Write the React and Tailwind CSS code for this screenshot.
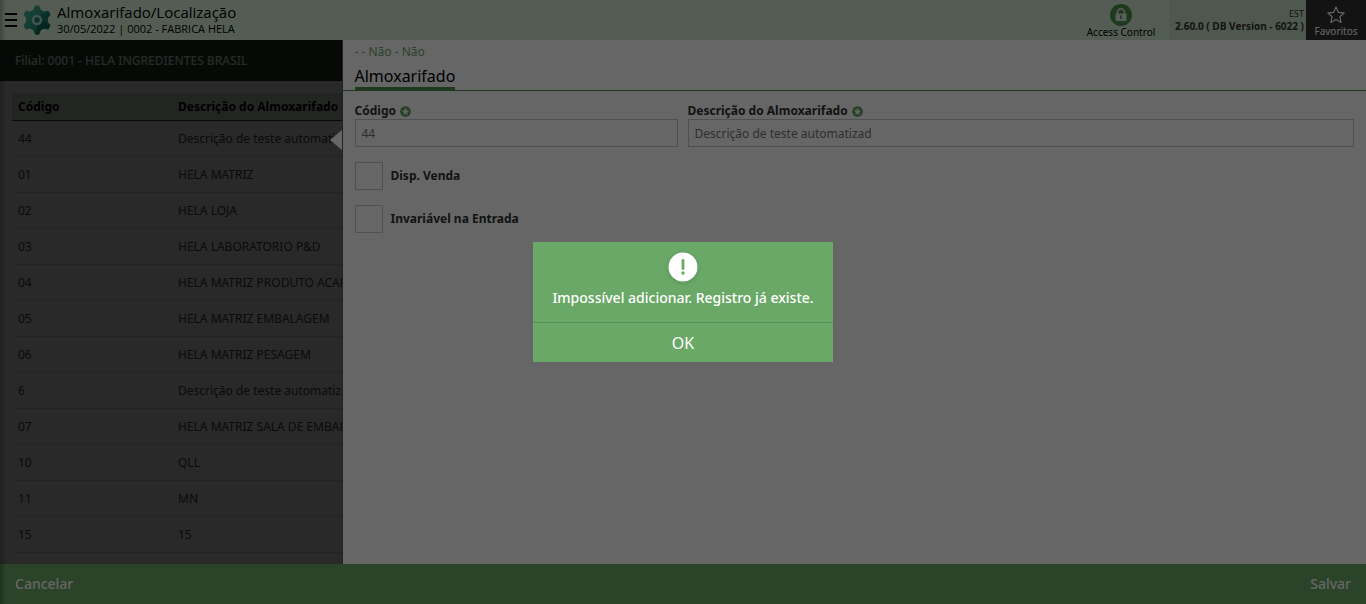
import { useId } from "react";

const rows = [
  ["44", "Descrição de teste automatizad"],
  ["01", "HELA MATRIZ"],
  ["02", "HELA LOJA"],
  ["03", "HELA LABORATORIO P&D"],
  ["04", "HELA MATRIZ PRODUTO ACABADO"],
  ["05", "HELA MATRIZ EMBALAGEM"],
  ["06", "HELA MATRIZ PESAGEM"],
  ["6", "Descrição de teste automatizad"],
  ["07", "HELA MATRIZ SALA DE EMBALAGEM"],
  ["10", "QLL"],
  ["11", "MN"],
  ["15", "15"],
];

function GearLogo() {
  return (
    <svg className="h-8 w-7 shrink-0" viewBox="0 0 28 32" aria-hidden="true">
      <defs>
        <linearGradient id="gear" x1="0" y1="0" x2="1" y2="1">
          <stop offset="0.2" stopColor="#40a78e" />
          <stop offset="0.75" stopColor="#157c66" />
        </linearGradient>
        <clipPath id="gear-shape">
          <path d="M12 1.500h4l1.800 4.200 3.200 1.700 4.200-1 2.300 4-2.500 3.600v4l2.500 3.600-2.300 4-4.200-1-3.200 1.700L16 30.500h-4l-1.800-4.200L7 24.600l-4.200 1-2.300-4L3 18v-4L.5 10.400l2.300-4 4.200 1 3.200-1.700z" />
        </clipPath>
      </defs>
      <g clipPath="url(#gear-shape)">
        <path d="M0 0h28v32H0z" fill="url(#gear)" />
        <path d="M17 11l11-4v12l-9-1z" fill="#0d6a56" opacity="0.5" />
        <path d="M18 17l10 4v11H12l2-10z" fill="#075946" opacity="0.8" />
      </g>
      <circle cx="14" cy="16" r="4" fill="#157c66" stroke="#a5cdbd" strokeWidth="2.600" />
    </svg>
  );
}

function Required() {
  return (
    <svg className="size-[11px]" viewBox="0 0 11 11" aria-hidden="true">
      <circle cx="5.5" cy="5.5" r="5.300" fill="#5c9c5a" />
      <path d="M5.500 2.300v3.400M2.500 4.600l3 1.100M8.500 4.600l-3 1.100M3.600 8.200l1.900-2.500M7.400 8.200l-1.900-2.500" stroke="#fff" strokeWidth="1.500" />
    </svg>
  );
}

function Field({ label, value, className }) {
  const id = useId();
  return (
    <div className={className}>
      <label htmlFor={id} className="flex h-4 items-center gap-1 text-xs font-bold text-[#303030]">
        {label}
        <Required />
      </label>
      <input
        id={id}
        defaultValue={value}
        className="block h-7 w-full border border-[#c8c8c8] bg-white px-1.5 text-xs text-[#777]"
      />
    </div>
  );
}

function Check({ label }) {
  return (
    <label className="flex w-fit items-center gap-2 text-xs font-bold text-[#303030]">
      <input type="checkbox" className="size-7 appearance-none border border-[#c8c8c8] bg-white" />
      {label}
    </label>
  );
}

function Header() {
  return (
    <header className="flex h-10 shrink-0 bg-[#cfe8cf] text-black">
      <div className="flex min-w-0 flex-1 items-center">
        <button aria-label="Menu" className="flex h-10 w-[23px] items-center pl-[5px]">
          <svg className="h-4 w-3" viewBox="0 0 12 16" aria-hidden="true">
            <path d="M0 2h12M0 8h12M0 14h12" stroke="currentColor" strokeWidth="2" />
          </svg>
        </button>
        <GearLogo />
        <div className="pb-0.5 pl-1.5 font-['Open_Sans','Noto_Sans',sans-serif]">
          <h1 className="text-[15px] leading-5">Almoxarifado/Localização</h1>
          <p className="text-[11px] leading-[14px]">30/05/2022 | 0002 - FABRICA HELA</p>
        </div>
      </div>
      <button className="flex w-24 flex-col items-center pt-1 text-[10px] leading-3">
        <svg className="size-[22px]" viewBox="0 0 22 22" aria-hidden="true">
          <circle cx="11" cy="11" r="11" fill="#4d8f4a" />
          <path d="M7.500 10V8.300a3.500 3.500 0 0 1 7 0V10" fill="none" stroke="#dcebdc" strokeWidth="1.600" />
          <rect x="5.500" y="9.500" width="11" height="7.500" rx="1" fill="#dcebdc" />
          <path d="M11 11.500v3.500" stroke="#4d8f4a" strokeWidth="1.600" />
        </svg>
        <span>Access Control</span>
      </button>
      <div className="flex w-[137px] flex-col justify-center bg-[#c5dcc5] pr-0.5 text-right text-[9px] leading-3 text-[#303030]">
        <span>EST</span>
        <b className="font-['Open_Sans','Noto_Sans',sans-serif] text-[10px] font-bold whitespace-nowrap">2.60.0 ( DB Version - 6022 )</b>
      </div>
      <button className="flex w-15 flex-col items-center bg-[#303030] pt-1.5 text-[10px] leading-3 text-white">
        <svg className="size-[18px] shrink-0" viewBox="0 0 18 18" aria-hidden="true">
          <path d="M9 1l2.400 5.300 5.800.6-4.300 3.900 1.200 5.700L9 13.600l-5.100 2.900 1.200-5.700L.8 6.900l5.800-.6z" fill="none" stroke="currentColor" strokeWidth="1.200" strokeLinejoin="round" />
        </svg>
        <span className="pt-px">Favoritos</span>
      </button>
    </header>
  );
}

function Sidebar() {
  return (
    <aside className="relative w-1/4 shrink-0 overflow-hidden bg-white">
      <div className="flex h-[41px] items-center bg-[#274427] pl-[15px] text-xs font-medium text-white">
        Filial: 0001 - HELA INGREDIENTES BRASIL
      </div>
      <div className="pt-3 pl-3">
        <table className="w-[600px] table-fixed border-collapse text-left text-xs text-[#484848]">
          <thead>
            <tr className="h-[27px] border-b border-[#305030] bg-[#dceadc] text-black">
              <th className="w-40 pt-0.5 pl-1.5 font-bold">Código</th>
              <th className="pt-0.5 pl-1.5 font-bold">Descrição do Almoxarifado</th>
            </tr>
          </thead>
          <tbody>
            {rows.map(([code, name]) => (
              <tr key={code} className="h-9 border-b border-[#ddd]">
                <td className="pt-0.5 pl-1.5">{code}</td>
                <td className="pt-0.5 pl-1.5">{name}</td>
              </tr>
            ))}
          </tbody>
        </table>
      </div>
      <div className="absolute inset-0 bg-black/60" />
      <svg className="absolute top-[90px] right-0 h-5 w-3" viewBox="0 0 12 20" aria-hidden="true">
        <path d="M12 0v20L0 10z" fill="#fff" />
      </svg>
    </aside>
  );
}

export default function App() {
  return (
    <div className="relative flex h-screen flex-col overflow-hidden bg-white font-['Noto_Sans',sans-serif]">
      <Header />
      <div className="flex min-h-0 flex-1">
        <Sidebar />
        <main className="min-w-0 flex-1 border-l border-[#555]">
          <div className="border-b border-[#4d8f4a] pl-3">
            <p className="pt-1 text-xs leading-4 text-[#69a866]">- - Não - Não</p>
            <h2 className="mt-1.5 w-fit border-b-3 border-[#4d8f4a] text-base leading-[21px] text-black">Almoxarifado</h2>
          </div>
          <form className="px-3 pt-3" onSubmit={(e) => e.preventDefault()}>
            <div className="flex gap-2.5">
              <Field label="Código" value="44" className="w-[323px]" />
              <Field label="Descrição do Almoxarifado" value="Descrição de teste automatizad" className="flex-1" />
            </div>
            <div className="mt-[15px] flex flex-col gap-[15px]">
              <Check label="Disp. Venda" />
              <Check label="Invariável na Entrada" />
            </div>
          </form>
        </main>
      </div>
      <footer className="flex h-10 shrink-0 items-center justify-between bg-[#69a866] px-[15px] text-sm font-medium text-white">
        <button>Cancelar</button>
        <button>Salvar</button>
      </footer>

      <div className="absolute inset-0 flex items-center justify-center bg-black/60">
        <div className="absolute inset-y-0 left-0 w-1.5 bg-linear-to-r from-black/25 to-transparent" />
        <div role="alertdialog" aria-modal="true" aria-labelledby="alert-text" className="w-[300px] bg-[#69a866] text-center text-white">
          <div className="flex h-20 flex-col items-center pt-2.5">
            <svg className="size-[30px] drop-shadow-sm" viewBox="0 0 30 30" aria-hidden="true">
              <circle cx="15" cy="15" r="14.500" fill="#fff" />
              <path d="M15 8.500v8" stroke="#69a866" strokeWidth="2.800" strokeLinecap="round" />
              <circle cx="15" cy="21" r="1.700" fill="#69a866" />
            </svg>
            <p id="alert-text" className="pt-1.5 text-sm leading-5 font-medium">Impossível adicionar. Registro já existe.</p>
          </div>
          <button className="block h-10 w-full border-t border-[#56905a] text-base">OK</button>
        </div>
      </div>
    </div>
  );
}
